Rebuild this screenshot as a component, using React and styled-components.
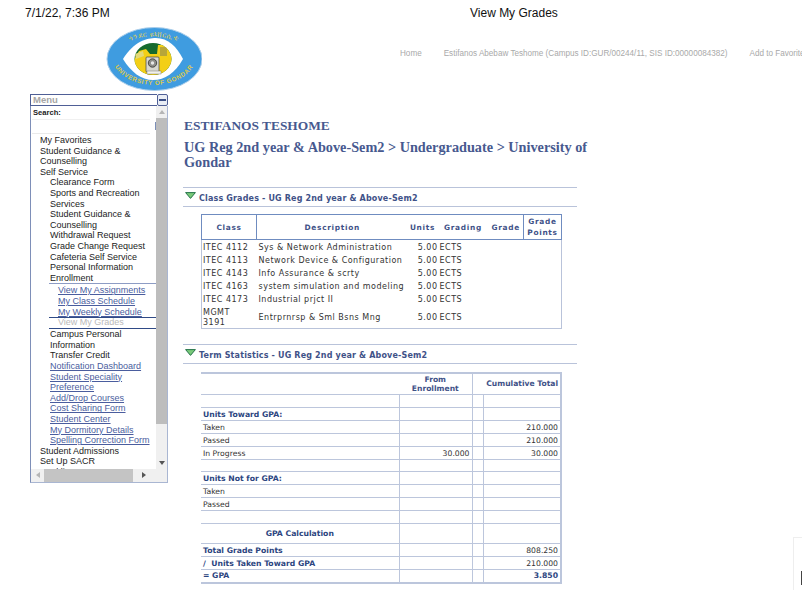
import React from "react";
import styled, { createGlobalStyle } from "styled-components";

const GlobalStyle = createGlobalStyle`
    html, body {
        margin: 0;
        padding: 0;
        background: #fff;
        overflow: hidden;
    }
    body {
        font-family: "Liberation Sans", Arial, sans-serif;
    }
`;

const Page = styled.div`
    position: relative;
    width: 802px;
    height: 590px;
    overflow: hidden;
`;

const PrintBar = styled.div`
    display: grid;
    grid-template-columns: 445px 1fr;
    height: 27px;
    padding-left: 25px;
    align-items: center;
    font-size: 12px;
    color: #111;
    line-height: 27px;
`;

const Banner = styled.div`
    display: flex;
    height: 67px;
    padding-left: 106px;
`;

const LogoMark = styled.svg`
    flex: none;
    width: 96px;
    height: 66px;
`;

const NavBar = styled.div`
    display: flex;
    margin-left: 198px;
    margin-top: 21px;
    font-size: 8.15px;
    line-height: 12px;
    color: #a9a9a9;
    white-space: nowrap;
`;

const NavItem = styled.span`
    margin-right: ${(props) => props.$gap}px;
`;

const Body = styled.div`
    display: flex;
    align-items: flex-start;
`;

/* left menu */
const Menu = styled.div`
    flex: none;
    width: 138px;
    height: 389px;
    margin-left: 30px;
    display: flex;
    flex-direction: column;
    box-sizing: border-box;
`;

const MenuHead = styled.div`
    display: flex;
    height: 12px;
    flex: none;
`;

const MenuTitle = styled.div`
    flex: 1;
    border: 1px solid #4f5f96;
    border-right: 0;
    color: #a6a6a6;
    font-size: 9.5px;
    font-weight: bold;
    line-height: 10px;
    padding-left: 2px;
`;

const Collapse = styled.div`
    flex: none;
    width: 11px;
    height: 12px;
    box-sizing: border-box;
    border: 1px solid #4f5f96;
    border-radius: 2px;
    background: #e9edf5;
    display: flex;
    align-items: center;
    justify-content: center;
    &:before {
        content: "";
        width: 7px;
        height: 2px;
        background: #3c4f86;
    }
`;

const MenuBody = styled.div`
    flex: 1;
    min-height: 0;
    display: flex;
    flex-direction: column;
    border-left: 1px solid #7e8fb8;
    border-right: 1px solid #a9b6d2;
    border-bottom: 1px solid #a9b6d2;
`;

const MenuView = styled.div`
    flex: 1;
    min-height: 0;
    display: flex;
`;

const MenuClip = styled.div`
    flex: 1;
    min-width: 0;
    overflow: hidden;
`;

const SearchBox = styled.div`
    position: relative;
    height: 28px;
    padding: 2px 0 0 2px;
    box-sizing: border-box;
    font-size: 7.6px;
    font-weight: bold;
    line-height: 10px;
    color: #222;
    &:before {
        content: "";
        position: absolute;
        left: 1px;
        right: 6px;
        top: 13px;
        bottom: 0;
        border-top: 1px solid #f0f0f0;
        border-bottom: 1px solid #eaeaea;
    }
    &:after {
        content: "";
        position: absolute;
        right: 0;
        top: 16px;
        height: 8px;
        width: 1px;
        background: #7c8fb8;
    }
`;

const MenuList = styled.div`
    padding-top: 1px;
    width: 125px;
    font-size: 9px;
    line-height: 10.6px;
    color: #1b1b1b;
    white-space: nowrap;
`;

const Item = styled.div`
    padding-left: ${(props) => props.$indent}px;
    ${(props) =>
        props.$link &&
        `color: #4a5d9e;
         text-decoration: underline;`}
`;

const SubGroup = styled.div`
    margin-left: 18px;
    padding: 1px 0 0 9px;
    border-top: 1px solid #8d9cc4;
`;

const SubLink = styled.div`
    color: #4a5d9e;
    text-decoration: underline;
`;

const Current = styled.div`
    margin: 0 0 0.6px -9px;
    padding-left: 9px;
    border-top: 1px solid #2f4a86;
    border-bottom: 1px solid #2f4a86;
    color: #b9b9b9;
    line-height: 9.6px;
`;

const VScroll = styled.div`
    flex: none;
    width: 11px;
    display: flex;
    flex-direction: column;
    background: #f0f0f0;
`;

const ScrollBtn = styled.div`
    flex: none;
    height: 12px;
    width: ${(props) => (props.$width ? `${props.$width}px` : "auto")};
    display: flex;
    align-items: center;
    justify-content: center;
    color: ${(props) => props.$color || "#555"};
`;

const VThumb = styled.div`
    flex: none;
    height: 306px;
    background: #bdbdbd;
`;

const VGap = styled.div`
    flex: 1;
`;

const HScroll = styled.div`
    flex: none;
    height: 13px;
    display: flex;
    background: #f0f0f0;
`;

const HThumb = styled.div`
    flex: none;
    width: 89px;
    background: #c4c4c4;
`;

const Arrow = ({ d }) => (
    <svg width="6" height="6" viewBox="0 0 6 6">
        <path d={d} fill="currentColor" />
    </svg>
);

/* main column */
const Main = styled.div`
    flex: none;
    width: 394px;
    margin-left: 15px;
    padding-top: 25px;
`;

const Name = styled.h1`
    margin: 0 0 0 1px;
    font-family: "Liberation Serif", serif;
    font-size: 13.4px;
    line-height: 14px;
    font-weight: bold;
    color: #47598f;
`;

const Career = styled.h2`
    margin: 7px -20px 0 1px;
    font-family: "Liberation Serif", serif;
    font-size: 14.25px;
    line-height: 15px;
    font-weight: bold;
    color: #47598f;
`;

const SectionHead = styled.div`
    display: flex;
    align-items: center;
    height: 16px;
    margin-top: ${(props) => props.$top}px;
    padding: 2px 0 0 2px;
    border-top: 1px solid #b9c3da;
    border-bottom: 1px solid #b9c3da;
    font-family: "DejaVu Sans", Verdana, sans-serif;
    font-size: 8px;
    letter-spacing: 0.16px;
    font-weight: bold;
    color: #3f5288;
    white-space: nowrap;
`;

const Twisty = styled.svg`
    flex: none;
    width: 11px;
    height: 7px;
    margin: -6px 3px 0 0;
`;

const Grades = styled.table`
    width: 360px;
    margin: 7px 0 0 18px;
    border-collapse: collapse;
    table-layout: fixed;
    font-family: "DejaVu Sans", Verdana, sans-serif;
    font-size: 8px;
    letter-spacing: 0.5px;
    color: #333;
    border: 1px solid #b9c3da;
`;

const GradeHead = styled.th`
    height: 24px;
    padding: 0;
    font-size: 7.4px;
    line-height: 11px;
    letter-spacing: 0.7px;
    color: #3f5288;
    font-weight: bold;
    text-align: center;
    border-top: 1px solid #6f8cc0;
    border-bottom: 1px solid #6f8cc0;
    border-left: ${(props) => (props.$rule ? "1px solid #6f8cc0" : "0")};
    border-right: ${(props) => (props.$rule ? "1px solid #6f8cc0" : "0")};
`;

const GradeCell = styled.td`
    height: 11px;
    padding: 2px 0 0 ${(props) => props.$pad ?? 2}px;
    line-height: 10px;
    white-space: nowrap;
    text-align: ${(props) => props.$align || "left"};
`;

const CodeCell = styled.td`
    padding: 3px 6px 0 1px;
    line-height: 10px;
    white-space: normal;
`;

const Stats = styled.table`
    width: 360px;
    margin: 8px 0 0 18px;
    border-collapse: collapse;
    table-layout: fixed;
    font-family: "DejaVu Sans", Verdana, sans-serif;
    font-size: 7.7px;
    color: #333;
    border-top: 2px solid #bcc6dc;
    border-bottom: 2px solid #bcc6dc;
    border-right: 2px solid #bcc6dc;
`;

const StatHead = styled.th`
    height: 20px;
    padding: 0 2px;
    font-size: 7.6px;
    line-height: 9.5px;
    font-weight: bold;
    color: #3f5288;
    text-align: ${(props) => (props.$end ? "right" : "center")};
    border-bottom: 1px solid #bcc6dc;
    border-right: ${(props) => (props.$rule ? "1px solid #bcc6dc" : "0")};
`;

const StatRow = styled.tr`
    height: ${(props) => props.$height || 13}px;
`;

const StatCell = styled.td`
    padding: 0 2px;
    line-height: 9px;
    border: 1px solid #bcc6dc;
    border-left: ${(props) => (props.$first ? "0" : "1px solid #bcc6dc")};
    border-right: ${(props) => (props.$last ? "0" : "1px solid #bcc6dc")};
    white-space: pre;
    text-align: ${(props) => (props.$num ? "right" : props.$center ? "center" : "left")};
    font-weight: ${(props) => (props.$bold ? "bold" : "normal")};
    color: ${(props) => (props.$bold ? "#2c4580" : "#333")};
`;

const CornerFrame = styled.div`
    position: absolute;
    left: 793px;
    top: 537px;
    width: 9px;
    height: 53px;
    box-sizing: border-box;
    border-top: 1px solid #eeeeee;
    border-left: 1px solid #eeeeee;
    &:after {
        content: "";
        position: absolute;
        right: 0;
        top: 33px;
        width: 1px;
        height: 14px;
        background: #444;
    }
`;

const Logo = () => (
    <LogoMark viewBox="0 0 96 66">
        <defs>
            <path id="logoTop" d="M8 33 A40 23.5 0 0 1 88 33" />
            <path id="logoBottom" d="M5 27 A43 31 0 0 0 91 27" />
            <clipPath id="logoCrest">
                <ellipse cx="47" cy="32" rx="18.5" ry="16" />
            </clipPath>
        </defs>
        <ellipse cx="48.5" cy="32" rx="47.5" ry="31.5" fill="#3f9ce0" stroke="#a9cdea" strokeWidth="1" />
        <path d="M17 32 C28 14 41 11 50 11 C62 11 71 20 77 32 C69 46 59 53 47 53 C35 53 25 45 17 32 Z" fill="#fff" />
        <g clipPath="url(#logoCrest)">
            <rect x="28" y="15" width="38" height="34" fill="#166a2e" />
            <path d="M28 33 L33 24 L40 22 L44 27 L51 27 L52 18 L62 18 L66 30 L66 50 L28 50 Z" fill="#f3cf16" />
            <path d="M29 27 L37 24 L38 29 L30 32 Z" fill="#e3d978" />
            <rect x="54" y="20" width="7" height="9" fill="#b7a63a" />
        </g>
        <rect x="40" y="30" width="13" height="15" rx="1" fill="#d8d8d0" stroke="#444" strokeWidth="0.7" />
        <circle cx="46.5" cy="36" r="4.2" fill="#8d8d88" stroke="#333" strokeWidth="0.8" />
        <circle cx="46.5" cy="36" r="1.7" fill="#e8e8e8" />
        <rect x="41" y="44" width="14" height="3" fill="#f1f1ea" stroke="#666" strokeWidth="0.4" />
        <text fontFamily="'Noto Sans', 'DejaVu Sans', sans-serif" fontSize="7" fill="#e4d24e" letterSpacing="0.4">
            <textPath href="#logoTop" startOffset="50%" textAnchor="middle">
                ጎንደር ዩኒቨርሲቲ
            </textPath>
        </text>
        <text fontFamily="'Liberation Sans', sans-serif" fontSize="6.3" fontWeight="bold" fill="#dcc94a" letterSpacing="0.6">
            <textPath href="#logoBottom" startOffset="50%" textAnchor="middle">
                UNIVERSITY OF GONDAR
            </textPath>
        </text>
    </LogoMark>
);

const Triangle = () => (
    <Twisty viewBox="0 0 11 7">
        <path d="M0.6 0.6 H10.4 L5.5 6.4 Z" fill="#79c979" stroke="#25734a" strokeWidth="1" />
    </Twisty>
);

const courses = [
    ["ITEC 4112", "Sys & Network Administration"],
    ["ITEC 4113", "Network Device & Configuration"],
    ["ITEC 4143", "Info Assurance & scrty"],
    ["ITEC 4163", "system simulation and modeling"],
    ["ITEC 4173", "Industrial prjct II"],
    ["MGMT 3191", "Entrprnrsp & Sml Bsns Mng"],
];

const statRows = [
    { height: 13 },
    { label: "Units Toward GPA:", bold: true },
    { label: "Taken", cum: "210.000" },
    { label: "Passed", cum: "210.000" },
    { label: "In Progress", from: "30.000", cum: "30.000" },
    { height: 12 },
    { label: "Units Not for GPA:", bold: true },
    { label: "Taken" },
    { label: "Passed" },
    { height: 13 },
    { label: "GPA Calculation", bold: true, center: true, height: 20 },
    { label: "Total Grade Points", bold: true, cum: "808.250" },
    { label: "/  Units Taken Toward GPA", bold: true, cum: "210.000" },
    { label: "= GPA", bold: true, cum: "3.850", cumBold: true },
];

export default function App() {
    return (
        <Page>
            <GlobalStyle />
            <PrintBar>
                <span>7/1/22, 7:36 PM</span>
                <span>View My Grades</span>
            </PrintBar>
            <Banner>
                <Logo />
                <NavBar>
                    <NavItem $gap={22}>Home</NavItem>
                    <NavItem $gap={22}>Estifanos Abebaw Teshome (Campus ID:GUR/00244/11, SIS ID:00000084382)</NavItem>
                    <NavItem $gap={0}>Add to Favorites</NavItem>
                </NavBar>
            </Banner>
            <Body>
                <Menu>
                    <MenuHead>
                        <MenuTitle>Menu</MenuTitle>
                        <Collapse />
                    </MenuHead>
                    <MenuBody>
                        <MenuView>
                            <MenuClip>
                                <SearchBox>Search:</SearchBox>
                                <MenuList>
                                    <Item $indent={9}>My Favorites</Item>
                                    <Item $indent={9}>Student Guidance &amp;<br />Counselling</Item>
                                    <Item $indent={9}>Self Service</Item>
                                    <Item $indent={19}>Clearance Form</Item>
                                    <Item $indent={19}>Sports and Recreation<br />Services</Item>
                                    <Item $indent={19}>Student Guidance &amp;<br />Counselling</Item>
                                    <Item $indent={19}>Withdrawal Request</Item>
                                    <Item $indent={19}>Grade Change Request</Item>
                                    <Item $indent={19}>Cafeteria Self Service</Item>
                                    <Item $indent={19}>Personal Information</Item>
                                    <Item $indent={19}>Enrollment</Item>
                                    <SubGroup>
                                        <SubLink>View My Assignments</SubLink>
                                        <SubLink>My Class Schedule</SubLink>
                                        <SubLink>My Weekly Schedule</SubLink>
                                        <Current>View My Grades</Current>
                                    </SubGroup>
                                    <Item $indent={19}>Campus Personal<br />Information</Item>
                                    <Item $indent={19}>Transfer Credit</Item>
                                    <Item $indent={19} $link>Notification Dashboard</Item>
                                    <Item $indent={19} $link>Student Speciality<br />Preference</Item>
                                    <Item $indent={19} $link>Add/Drop Courses</Item>
                                    <Item $indent={19} $link>Cost Sharing Form</Item>
                                    <Item $indent={19} $link>Student Center</Item>
                                    <Item $indent={19} $link>My Dormitory Details</Item>
                                    <Item $indent={19} $link>Spelling Correction Form</Item>
                                    <Item $indent={9}>Student Admissions</Item>
                                    <Item $indent={9}>Set Up SACR</Item>
                                    <Item $indent={9}>Worklist</Item>
                                </MenuList>
                            </MenuClip>
                            <VScroll>
                                <ScrollBtn $color="#b5b5b5"><Arrow d="M3 1 L6 5 H0 Z" /></ScrollBtn>
                                <VThumb />
                                <VGap />
                                <ScrollBtn><Arrow d="M0 1 H6 L3 5 Z" /></ScrollBtn>
                            </VScroll>
                        </MenuView>
                        <HScroll>
                            <ScrollBtn $color="#b5b5b5" $width={13}><Arrow d="M1 3 L5 0 V6 Z" /></ScrollBtn>
                            <HThumb />
                            <ScrollBtn $width={22}><Arrow d="M1 0 L5 3 L1 6 Z" /></ScrollBtn>
                        </HScroll>
                    </MenuBody>
                </Menu>
                <Main>
                    <Name>ESTIFANOS TESHOME</Name>
                    <Career>UG Reg 2nd year &amp; Above-Sem2 &gt; Undergraduate &gt; University of Gondar</Career>
                    <SectionHead $top={17}>
                        <Triangle />
                        Class Grades - UG Reg 2nd year &amp; Above-Sem2
                    </SectionHead>
                    <Grades>
                        <colgroup>
                            <col style={{ width: 55 }} />
                            <col style={{ width: 151 }} />
                            <col style={{ width: 30 }} />
                            <col style={{ width: 51 }} />
                            <col style={{ width: 35 }} />
                            <col style={{ width: 38 }} />
                        </colgroup>
                        <thead>
                            <tr>
                                <GradeHead $rule>Class</GradeHead>
                                <GradeHead>Description</GradeHead>
                                <GradeHead>Units</GradeHead>
                                <GradeHead>Grading</GradeHead>
                                <GradeHead>Grade</GradeHead>
                                <GradeHead $rule>Grade Points</GradeHead>
                            </tr>
                        </thead>
                        <tbody>
                            {courses.map(([code, title]) => (
                                <tr key={code}>
                                    <CodeCell>{code}</CodeCell>
                                    <GradeCell>{title}</GradeCell>
                                    <GradeCell $align="right" $pad={0}>5.00</GradeCell>
                                    <GradeCell>ECTS</GradeCell>
                                    <GradeCell />
                                    <GradeCell />
                                </tr>
                            ))}
                        </tbody>
                    </Grades>
                    <SectionHead $top={15}>
                        <Triangle />
                        Term Statistics - UG Reg 2nd year &amp; Above-Sem2
                    </SectionHead>
                    <Stats>
                        <colgroup>
                            <col style={{ width: 198 }} />
                            <col style={{ width: 73 }} />
                            <col style={{ width: 11 }} />
                            <col style={{ width: 78 }} />
                        </colgroup>
                        <thead>
                            <tr>
                                <StatHead />
                                <StatHead $rule>From<br />Enrollment</StatHead>
                                <StatHead colSpan={2} $end>Cumulative Total</StatHead>
                            </tr>
                        </thead>
                        <tbody>
                            {statRows.map((row, i) => (
                                <StatRow key={i} $height={row.height}>
                                    <StatCell $first $bold={row.bold} $center={row.center}>{row.label}</StatCell>
                                    <StatCell $num>{row.from}</StatCell>
                                    <StatCell />
                                    <StatCell $last $num $bold={row.cumBold}>{row.cum}</StatCell>
                                </StatRow>
                            ))}
                        </tbody>
                    </Stats>
                </Main>
            </Body>
            <CornerFrame />
        </Page>
    );
}
